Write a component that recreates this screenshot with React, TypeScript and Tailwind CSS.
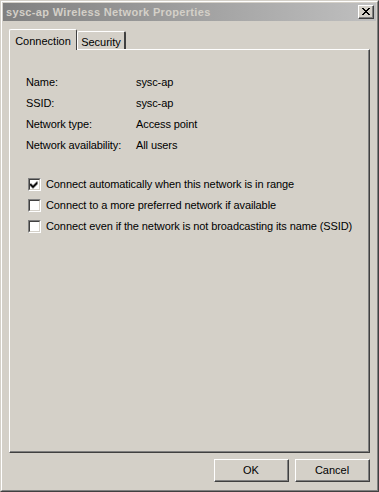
import React from "react"

const font = { fontFamily: '"Liberation Sans", Arial, sans-serif' }

function Check({ checked }: { checked?: boolean }) {
  return (
    <div className="w-[13px] h-[13px] border-t border-l border-t-[#808080] border-l-[#808080] border-b border-r border-b-white border-r-white">
      <div className="w-[11px] h-[11px] border-t border-l border-t-[#404040] border-l-[#404040] border-b border-r border-b-[#d4d0c8] border-r-[#d4d0c8] bg-white">
        {checked && (
          <svg width="9" height="9" viewBox="0 0 9 9" className="block">
            <path d="M1 3h1v1h1v1h1v-1h1v-1h1v-1h1v-1h1v3h-1v1h-1v1h-1v1h-1v1h-1v-1h-1v-1h-1v-1h-1z" fill="#000" transform="translate(-0.5 0.5)" />
          </svg>
        )}
      </div>
    </div>
  )
}

function Button({ label }: { label: string }) {
  return (
    <div className="w-[75px] h-[23px] border-t border-l border-t-white border-l-white border-b border-r border-b-[#404040] border-r-[#404040]">
      <div className="h-full flex items-center justify-center border-b border-r border-b-[#808080] border-r-[#808080] text-[11px] text-black">
        {label}
      </div>
    </div>
  )
}

export default function App() {
  const rows = [
    ["Name:", "sysc-ap"],
    ["SSID:", "sysc-ap"],
    ["Network type:", "Access point"],
    ["Network availability:", "All users"],
  ]
  const opts = [
    { label: "Connect automatically when this network is in range", checked: true },
    { label: "Connect to a more preferred network if available", checked: false },
    { label: "Connect even if the network is not broadcasting its name (SSID)", checked: false },
  ]

  return (
    <div style={font} className="w-[379px] h-[492px] bg-[#d4d0c8] border-t border-l border-t-[#d4d0c8] border-l-[#d4d0c8] border-b border-r border-b-[#404040] border-r-[#404040]">
      <div className="h-full border-t border-l border-t-white border-l-white border-b border-r border-b-[#808080] border-r-[#808080] p-[1px] flex flex-col">
        {/* title bar */}
        <div className="h-[18px] bg-gradient-to-r from-[#808080] to-[#c0c0c0] flex items-center justify-between pl-[3px] pr-[2px]">
          <span className="text-[11px] font-bold text-[#d4d0c8] tracking-[0.33px]">sysc-ap Wireless Network Properties</span>
          <div className="w-[16px] h-[14px] bg-[#d4d0c8] border-t border-l border-t-white border-l-white border-b border-r border-b-[#404040] border-r-[#404040]">
            <div className="h-full border-b border-r border-b-[#808080] border-r-[#808080] flex items-center justify-center">
              <svg width="8" height="7" viewBox="0 0 8 7">
                <path d="M0 0h2v1h1v1h2v-1h1v-1h2v1h-1v1h-1v1h-1v1h1v1h1v1h1v1h-2v-1h-1v-1h-2v1h-1v1h-2v-1h1v-1h1v-1h1v-1h-1v-1h-1v-1h-1z" fill="#000" />
              </svg>
            </div>
          </div>
        </div>

        {/* tabs */}
        <div className="mt-[7px] ml-[6px] flex items-end h-[21px] text-[11px] text-black">
          <div className="relative z-10 h-[21px] w-[68px] bg-[#d4d0c8] border-t border-l border-t-white border-l-white border-r border-r-[#404040] rounded-t-[2px] flex items-start justify-center pt-[3px] -mb-[1px]">
            Connection
          </div>
          <div className="h-[18px] w-[49px] border-t border-l border-t-white border-l-white border-r-2 border-r-[#404040] rounded-t-[2px] flex items-start justify-center pt-[2px]">
            Security
          </div>
        </div>

        {/* tab panel */}
        <div className="ml-[6px] mr-[6px] h-[404px] border-t border-l border-t-white border-l-white border-b border-r border-b-[#404040] border-r-[#404040]">
          <div className="h-full border-b border-r border-b-[#808080] border-r-[#808080] pt-[25px] pl-[16px] text-[11px] text-black tracking-[-0.1px]">
            <div className="flex flex-col gap-[7px]">
              {rows.map(([k, v]) => (
                <div key={k} className="flex h-[14px] items-center">
                  <span className="w-[110px]">{k}</span>
                  <span>{v}</span>
                </div>
              ))}
            </div>
            <div className="mt-[26px] ml-[2px] flex flex-col gap-[8px]">
              {opts.map((o) => (
                <div key={o.label} className="flex items-center gap-[5px] h-[13px]">
                  <Check checked={o.checked} />
                  <span>{o.label}</span>
                </div>
              ))}
            </div>
          </div>
        </div>

        {/* buttons */}
        <div className="mt-[6px] mr-[6px] flex justify-end gap-[6px]">
          <Button label="OK" />
          <Button label="Cancel" />
        </div>
      </div>
    </div>
  )
}
